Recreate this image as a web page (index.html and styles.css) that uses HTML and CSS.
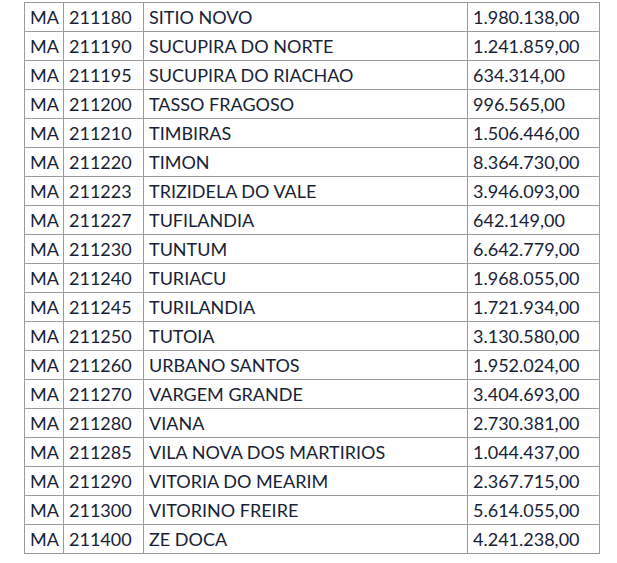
FILE: index.html
```html
<!DOCTYPE html>
<html lang="pt">
<head>
<meta charset="utf-8">
<title>Tabela</title>
<link rel="stylesheet" href="styles.css">
</head>
<body>
<table class="grid">
<colgroup><col class="c-uf"><col class="c-cod"><col class="c-mun"><col class="c-val"></colgroup>
<tbody>
<tr><td>MA</td><td>211180</td><td>SITIO NOVO</td><td>1.980.138,00</td></tr>
<tr><td>MA</td><td>211190</td><td>SUCUPIRA DO NORTE</td><td>1.241.859,00</td></tr>
<tr><td>MA</td><td>211195</td><td>SUCUPIRA DO RIACHAO</td><td>634.314,00</td></tr>
<tr><td>MA</td><td>211200</td><td>TASSO FRAGOSO</td><td>996.565,00</td></tr>
<tr><td>MA</td><td>211210</td><td>TIMBIRAS</td><td>1.506.446,00</td></tr>
<tr><td>MA</td><td>211220</td><td>TIMON</td><td>8.364.730,00</td></tr>
<tr><td>MA</td><td>211223</td><td>TRIZIDELA DO VALE</td><td>3.946.093,00</td></tr>
<tr><td>MA</td><td>211227</td><td>TUFILANDIA</td><td>642.149,00</td></tr>
<tr><td>MA</td><td>211230</td><td>TUNTUM</td><td>6.642.779,00</td></tr>
<tr><td>MA</td><td>211240</td><td>TURIACU</td><td>1.968.055,00</td></tr>
<tr><td>MA</td><td>211245</td><td>TURILANDIA</td><td>1.721.934,00</td></tr>
<tr><td>MA</td><td>211250</td><td>TUTOIA</td><td>3.130.580,00</td></tr>
<tr><td>MA</td><td>211260</td><td>URBANO SANTOS</td><td>1.952.024,00</td></tr>
<tr><td>MA</td><td>211270</td><td>VARGEM GRANDE</td><td>3.404.693,00</td></tr>
<tr><td>MA</td><td>211280</td><td>VIANA</td><td>2.730.381,00</td></tr>
<tr><td>MA</td><td>211285</td><td>VILA NOVA DOS MARTIRIOS</td><td>1.044.437,00</td></tr>
<tr><td>MA</td><td>211290</td><td>VITORIA DO MEARIM</td><td>2.367.715,00</td></tr>
<tr><td>MA</td><td>211300</td><td>VITORINO FREIRE</td><td>5.614.055,00</td></tr>
<tr><td>MA</td><td>211400</td><td>ZE DOCA</td><td>4.241.238,00</td></tr>
</tbody>
</table>
</body>
</html>
```
FILE: styles.css
```css
html, body {
  margin: 0;
  padding: 0;
  background: #ffffff;
}
body {
  padding: 2px 0 0 24px;
  font-family: "Lato", "Liberation Sans", sans-serif;
  color: #172236;
}
.grid {
  border-collapse: collapse;
  table-layout: fixed;
  width: 576px;
  font-size: 18px;
}
.c-uf { width: 39px; }
.c-cod { width: 80px; }
.c-mun { width: 324px; }
.c-val { width: 132px; }
.grid td {
  border: 1px solid #9b9b9b;
  padding: 1px 0 0 5px;
  height: 27px;
  line-height: 27px;
  white-space: nowrap;
  overflow: hidden;
}
```
